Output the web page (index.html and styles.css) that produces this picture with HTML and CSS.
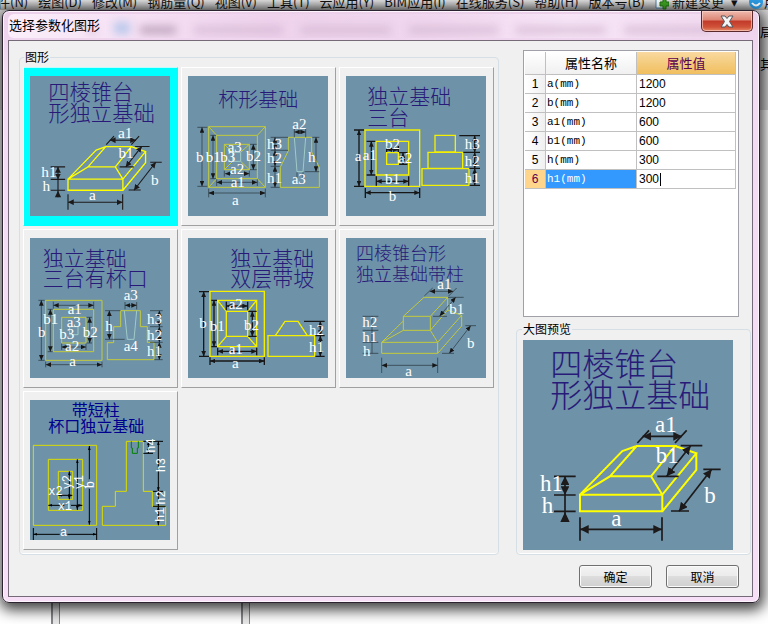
FILE: index.html
```html
<!DOCTYPE html>
<html lang="zh-CN">
<head>
<meta charset="utf-8">
<title>选择参数化图形</title>
<link rel="stylesheet" href="styles.css">
</head>
<body>
<svg class="defs" width="0" height="0" aria-hidden="true">
  <defs>
    <marker id="arrow" viewBox="0 0 16 14" refX="16" refY="7" markerWidth="16" markerHeight="14" markerUnits="userSpaceOnUse" orient="auto-start-reverse"><path d="M0 0L16 7L0 14Z" fill="#171717"/></marker>
    <marker id="arrow-big" viewBox="0 0 26 26" refX="26" refY="13" markerWidth="26" markerHeight="26" markerUnits="userSpaceOnUse" orient="auto-start-reverse"><path d="M0 0L26 13L0 26Z" fill="#1c1a1a"/></marker>
    <marker id="arrow-slim" viewBox="0 0 12 8" refX="12" refY="4" markerWidth="12" markerHeight="8" markerUnits="userSpaceOnUse" orient="auto-start-reverse"><path d="M0 0L12 4L0 8Z" fill="#000"/></marker>
    <symbol id="pyramid" viewBox="24 60 630 630">
      <text class="name name-pyramid" x="106" y="167">四棱锥台</text>
      <text class="name name-pyramid" x="106" y="261">形独立基础</text>
      <g fill="none" stroke="#ffff00" stroke-width="6">
        <path d="M195 524H442V574H195ZM195 524L285 469H408L442 524M285 469L365 378H480L408 469M195 524L322 393L365 378M480 378L544 400L442 524M544 400V450L442 574"/>
      </g>
      <g fill="none" stroke="#1c1a1a" stroke-width="5">
        <path d="M367 369L402 331M480 369L515 331M497 377H562M427 469H491M117 469H182M117 525H182M117 574H182M565 448H617M468 573H522M195 592V662M441 592V662"/>
        <path class="dim-big" d="M383 349H501"/>
        <path class="dim-big" d="M455 469L527 377"/>
        <path class="dim-big" d="M492 574L590 448"/>
        <path class="dim-big" d="M195 628H441"/>
        <path class="dim-big" d="M150 469V525"/>
        <path d="M150 525V606"/>
      </g>
      <path d="M150 576L164 606H136Z" fill="#1c1a1a"/>
      <g class="label label-pyramid">
        <text x="420" y="337">a1</text><text x="422" y="428">b1</text><text x="568" y="550">b</text>
        <text x="75" y="513">h1</text><text x="80" y="578">h</text><text x="289" y="618">a</text>
      </g>
    </symbol>
  </defs>
</svg>

<div class="backdrop" aria-hidden="true">
  <span class="splitter first"></span>
  <span class="splitter second"></span>
  <span class="edge-text upper">局</span>
  <span class="edge-text lower">其</span>
</div>

<nav class="menubar">
  <a href="#">件(N)</a><a href="#">绘图(D)</a><a href="#">修改(M)</a><a href="#">钢筋量(Q)</a><a href="#">视图(V)</a><a href="#">工具(T)</a><a href="#">云应用(Y)</a><a href="#">BIM应用(I)</a><a href="#">在线服务(S)</a><a href="#">帮助(H)</a><a href="#">版本号(B)</a>
  <a href="#" class="change"><svg width="14" height="16" viewBox="0 0 14 16"><path d="M1 0V14H9" fill="#fff" stroke="#4d83a8"/><path d="M8 5H11V8H14V12H11V15H8V12H5V8H8Z" fill="#3da321" stroke="#1f7010"/></svg>新建变更<span class="arrow">▾</span></a>
  <a href="#" class="user"><svg width="16" height="16" viewBox="0 0 16 16"><circle cx="8" cy="8" r="7" fill="#2c9be4"/><path d="M4 9Q8 14 12 9" fill="none" stroke="#fff" stroke-width="2"/></svg>用户</a>
</nav>

<main class="dialog">
  <header class="titlebar">
    <div class="ghosts" aria-hidden="true"><i></i><i class="blue"></i><i class="dark"></i><i></i><i></i><i></i><i></i><i></i></div>
    <h1>选择参数化图形</h1>
    <button class="close" aria-label="关闭"><svg width="14" height="13" viewBox="0 0 28 26"><path d="M2 2H10L14 7L18 2H26L19 13L26 24H18L14 19L10 24H2L9 13Z" fill="#f4f4f4" stroke="#50575f" stroke-width="2"/></svg></button>
  </header>

  <div class="panel">
    <div class="columns">
      <fieldset class="group shapes">
        <legend>图形</legend>
        <div class="tiles">
          <button class="tile selected" aria-label="四棱锥台形独立基础"><svg viewBox="0 0 420 420"><use href="#pyramid" width="420" height="420"/></svg></button>

          <button class="tile" aria-label="杯形基础"><svg viewBox="30 36 420 420">
            <text class="name" x="121" y="130">杯形基础</text>
            <g class="yellow thin"><path d="M92 188H262V370H92ZM116 214H238V344H116ZM139 241H214V317H139ZM92 188L116 214M262 188L238 214M92 370L116 344M262 370L238 344M139 241L164 265M214 241L188 265M139 317L164 292M214 317L188 292M331 220H401V264L424 310V370H307V310L331 260Z"/></g>
            <path class="pale" d="M164 265H188V292H164ZM349 220L357 323H375L383 220"/>
            <g class="black thin"><path d="M58 190H88M58 367H88M92 374V400M262 374V400M116 346V366M238 346V366M139 320V338M214 320V338M97 214H114M97 344H114M216 241H236M216 317H236M349 195V220M383 195V220M278 220H330M278 259H330M278 307H305M278 370H305M380 323H424M403 220H424M357 325V345M375 325V345"/>
            <path class="dim" d="M72 190V367"/><path class="dim" d="M105 214V344"/><path class="dim" d="M92 387H262"/><path class="dim" d="M116 355H238"/><path class="dim" d="M141 329H214"/><path class="dim" d="M226 241V317"/><path class="dim" d="M349 204H383"/><path class="dim" d="M291 220V259"/><path class="dim" d="M291 259V307"/><path class="dim" d="M291 307V370"/><path class="dim" d="M414 220V323"/></g>
            <g class="label"><text x="54" y="293">b</text><text x="83" y="293">b1</text><text x="127" y="293">b3</text><text x="204" y="290">b2</text><text x="149" y="264">a3</text><text x="156" y="330">a2</text><text x="158" y="369">a1</text><text x="162" y="423">a</text><text x="343" y="195">a2</text><text x="267" y="255">h3</text><text x="267" y="297">h2</text><text x="267" y="357">h1</text><text x="390" y="293">h</text><text x="341" y="360">a3</text></g>
          </svg></button>

          <button class="tile" aria-label="独立基础三台"><svg viewBox="30 36 420 420">
            <text class="name wide" x="94" y="120">独立基础</text><text class="name wide" x="94" y="184">三台</text>
            <g class="yellow"><path d="M87 198H251V367H87ZM120 232H218V333H120ZM152 266H187V301H152ZM297 214H358V264H297ZM276 265H380V313H276ZM258 314H399V364H258Z"/></g>
            <g class="black"><path d="M54 198H84M54 367H84M92 232H118M92 333H118M88 372V402M251 372V402M121 337V365M218 337V365M370 215H432M382 265H432M400 313H432M401 364H432M152 246V264M187 246V264M189 266H214M189 301H214"/>
            <path class="dim" d="M69 198V367"/><path class="dim" d="M106 232V333"/><path class="dim" d="M88 386H251"/><path class="dim" d="M121 352H218"/><path class="dim" d="M152 257H187"/><path class="dim" d="M201 266V301"/><path class="dim" d="M416 215V265"/><path class="dim" d="M416 265V313"/><path class="dim" d="M416 313V364"/></g>
            <g class="label"><text x="56" y="290">a</text><text x="80" y="287">a1</text><text x="147" y="254">b2</text><text x="186" y="297">a2</text><text x="147" y="361">b1</text><text x="158" y="411">b</text><text x="386" y="256">h3</text><text x="386" y="307">h2</text><text x="386" y="357">h1</text></g>
          </svg></button>

          <button class="tile" aria-label="独立基础三台有杯口"><svg viewBox="30 36 420 420">
            <text class="name wide" x="68" y="119">独立基础</text><text class="name wide" x="68" y="181">三台有杯口</text>
            <g class="yellow thin"><path d="M77 223H246V403H77ZM100 250H221V377H100ZM125 274H198V351H125ZM302 254H361V302H382V349H402V401H262V350H281V302H302Z"/></g>
            <path class="pale" d="M149 302H174V326H149ZM313 254L322 340H342L350 254"/>
            <g class="black thin"><path d="M55 223H74M55 403H74M83 250H98M83 377H98M77 407V424M246 407V424M100 227V248M221 227V248M125 353V372M198 353V372M200 274H216M200 351H216M315 228V250M350 228V250M255 254H301M255 340H314M390 254H428M390 302H428M390 349H428M403 401H428"/>
            <path class="dim" d="M64 223V403"/><path class="dim" d="M91 250V377"/><path class="dim" d="M77 416H246"/><path class="dim" d="M100 238H221"/><path class="dim" d="M125 363H198"/><path class="dim" d="M209 274V351"/><path class="dim" d="M315 238H350"/><path class="dim" d="M268 254V340"/><path class="dim" d="M418 254V302"/><path class="dim" d="M418 302V349"/><path class="dim" d="M418 349V401"/></g>
            <g class="label"><text x="54" y="333">b</text><text x="70" y="295">b1</text><text x="143" y="264">a1</text><text x="140" y="304">a3</text><text x="118" y="338">b3</text><text x="188" y="333">b2</text><text x="135" y="375">a2</text><text x="148" y="419">a</text><text x="311" y="221">a3</text><text x="256" y="314">h</text><text x="311" y="374">a4</text><text x="381" y="295">h3</text><text x="381" y="341">h2</text><text x="381" y="391">h1</text></g>
          </svg></button>

          <button class="tile" aria-label="独立基础双层带坡"><svg viewBox="30 36 420 420">
            <text class="name wide" x="157" y="119">独立基础</text><text class="name wide" x="157" y="181">双层带坡</text>
            <g class="yellow"><path d="M96 196H259V391H96ZM119 223H236V362H119ZM145 256H209V331H145ZM119 223L145 256M236 223L209 256M119 362L145 331M236 362L209 331M270 329H410V391H270ZM292 329L321 286H360L388 329"/></g>
            <g class="black"><path d="M63 197H93M63 391H93M100 223H117M100 362H117M96 394V417M259 394V417M119 365V388M236 365V388M145 227V253M209 227V253M211 256H236M211 331H236M378 286H440M412 329H440M412 391H440"/>
            <path class="dim" d="M77 197V391"/><path class="dim" d="M108 223V362"/><path class="dim" d="M96 405H259"/><path class="dim" d="M119 376H236"/><path class="dim" d="M145 240H209"/><path class="dim" d="M223 256V331"/><path class="dim" d="M427 286V329"/><path class="dim" d="M427 329V391"/></g>
            <g class="label"><text x="64" y="307">b</text><text x="95" y="315">b1</text><text x="152" y="250">a2</text><text x="198" y="311">b2</text><text x="152" y="384">a1</text><text x="162" y="426">a</text><text x="393" y="326">h2</text><text x="393" y="377">h1</text></g>
          </svg></button>

          <button class="tile" aria-label="四棱锥台形独立基础带柱"><svg viewBox="30 36 420 420">
            <text class="name narrow" x="60" y="101">四棱锥台形</text><text class="name narrow" x="60" y="164">独立基础带柱</text>
            <g class="yellow thin"><path d="M202 271H283V313H202ZM202 271L264 214H335L283 271M335 214V252L283 313M202 285L137 349M202 313L137 349H305L283 313M137 349V382H305V349L377 268V300L305 382M335 252L377 268"/></g>
            <g class="black thin"><path d="M265 210L290 186M338 210L362 186M336 214H383M291 271H333M80 271H127M80 313H127M80 349H127M80 382H127M108 271V382M137 395V441M305 395V441M388 299H420M318 382H354"/>
            <path class="dim" d="M281 196H352"/><path class="dim" d="M311 270L359 214"/><path class="dim" d="M340 382L404 299"/><path class="dim" d="M137 418H305"/></g>
            <g class="label"><text x="304" y="188">a1</text><text x="340" y="263">b1</text><text x="393" y="367">b</text><text x="79" y="303">h2</text><text x="79" y="349">h1</text><text x="81" y="391">h</text><text x="208" y="449">a</text></g>
          </svg></button>

          <button class="tile" aria-label="带短柱杯口独立基础"><svg viewBox="30 36 420 420">
            <text class="name column" x="155" y="84">带短柱</text><text class="name column" x="85" y="132">杯口独立基础</text>
            <g class="yellow crisp"><path d="M40 172H230V412H40ZM85 214H188V367H85ZM115 250H158V334H115ZM319 160H370V310H397V355H437V412H247V355H286V310H319Z"/></g>
            <path d="M334 160V180H337V196H352V180H355V160" fill="none" stroke="#008000" stroke-width="3"/>
            <g class="black crisp"><path d="M40 420V456M230 420V456M370 160H429M370 196H399M399 310H429M399 355H437"/>
            <path class="slim" d="M40 439H230"/><path class="slim" d="M208 174V410"/><path class="slim" d="M172 214V366"/><path class="slim" d="M148 250V334"/><path class="slim" d="M85 352H187"/><path class="slim" d="M115 322H157"/><path class="slim" d="M385 160V196"/><path class="slim" d="M415 160V310"/><path class="slim" d="M415 310V355"/><path class="slim" d="M415 355V412"/></g>
            <path d="M119 439H142M208 274V302M133 352H153" stroke="#6e92a8" stroke-width="5"/>
            <g class="label mono"><text x="120" y="445">a</text><text x="113" y="366">x1</text><text x="85" y="321">x2</text><text transform="translate(152 304) rotate(-90)">y2</text><text transform="translate(188 304) rotate(-90)">y1</text><text transform="translate(223 301) rotate(-90)">b</text><text transform="translate(404 194) rotate(-90)">h4</text><text transform="translate(434 253) rotate(-90)">h3</text><text transform="translate(434 350) rotate(-90)">h2</text><text transform="translate(432 402) rotate(-90)">h1</text></g>
          </svg></button>
        </div>
      </fieldset>

      <section class="side">
        <div class="table-box">
          <table>
            <colgroup><col class="c-num"><col class="c-name"><col class="c-value"></colgroup>
            <thead><tr><th></th><th>属性名称</th><th class="active">属性值</th></tr></thead>
            <tbody>
              <tr><th>1</th><td>a(mm)</td><td><input aria-label="a(mm)" value="1200"></td></tr>
              <tr><th>2</th><td>b(mm)</td><td><input aria-label="b(mm)" value="1200"></td></tr>
              <tr><th>3</th><td>a1(mm)</td><td><input aria-label="a1(mm)" value="600"></td></tr>
              <tr><th>4</th><td>b1(mm)</td><td><input aria-label="b1(mm)" value="600"></td></tr>
              <tr><th>5</th><td>h(mm)</td><td><input aria-label="h(mm)" value="300"></td></tr>
              <tr class="current"><th>6</th><td>h1(mm)</td><td><div class="editing"><input aria-label="h1(mm)" value="300"></div></td></tr>
            </tbody>
          </table>
        </div>
        <fieldset class="group preview">
          <legend>大图预览</legend>
          <svg viewBox="0 0 630 630" role="img" aria-label="四棱锥台形独立基础"><use href="#pyramid" width="630" height="630"/></svg>
        </fieldset>
      </section>
    </div>
    <footer class="actions"><button>确定</button><button>取消</button></footer>
  </div>
</main>
</body>
</html>
```
FILE: styles.css
```css
* { box-sizing: border-box; }

body {
  margin: 0;
  min-height: 100vh;
  overflow: hidden;
  position: relative;
  background: #fff;
  color: #000;
  font: 12px/16px "Liberation Sans", "Noto Sans CJK SC", sans-serif;
}

button, input { font: inherit; color: inherit; }
.defs { position: absolute; }

/* Application window behind the dialog */
.backdrop {
  position: absolute;
  inset: 0;
  overflow: hidden;
  background: linear-gradient(#d8d8d8 0 110px, #fff 110px);
}
.splitter {
  position: absolute;
  top: 110px;
  bottom: 0;
  width: 9px;
  border: solid #85858a;
  border-width: 0 1px 0 2px;
  background: #e8e8e8;
}
.first { left: 51px; }
.second { left: 241px; }
.edge-text { position: absolute; left: 760px; font-size: 13px; }
.upper { top: 25px; }
.lower { top: 57px; }

.menubar {
  position: relative;
  display: flex;
  gap: 10px;
  height: 10px;
  margin-left: -3px;
  overflow: hidden;
  background: linear-gradient(#dedede, #9a9a9a);
  font: 13px/16px "Noto Sans CJK SC", sans-serif;
  white-space: nowrap;
}
.menubar a {
  display: flex;
  height: 16px;
  margin-top: -6px;
  color: #111;
  text-decoration: none;
}
.menubar svg { flex: none; }
.menubar .change { gap: 3px; }
.arrow { margin-left: 4px; }

/* Dialog frame */
.dialog {
  position: relative;
  margin: 0 8px 19px 2px;
  padding: 0 6px 5px 5px;
  border: 1px solid #2b2430;
  border-radius: 7px;
  background: linear-gradient(#ecd0ea, #f3dcf3 60px, #f7dff7);
  box-shadow: inset 0 0 0 1px #fdf4fd, 1px 4px 14px 3px rgba(0, 0, 0, .75);
}
.titlebar {
  position: relative;
  display: flex;
  align-items: flex-start;
  justify-content: space-between;
  height: 29px;
}
.titlebar h1 {
  margin: 5px 0 0 1px;
  font: 13px/18px "Noto Sans CJK SC", sans-serif;
}
.titlebar h1, .close { position: relative; }
.ghosts {
  position: absolute;
  inset: 3px 40px 2px 0;
  display: flex;
  align-items: flex-end;
  gap: 18px;
  padding-left: 80px;
  overflow: hidden;
  border-radius: 6px;
  background: linear-gradient(90deg, #fbeefa 0, #f6e2f5 110px, #efd3ed 260px, #f0d6ee 420px, #f7e5f7 560px, #f3dcf2);
}
.ghosts i {
  flex: 1;
  height: 8px;
  margin-bottom: 4px;
  background: #cdb0cc;
  filter: blur(4px);
  opacity: .6;
}
.ghosts .blue { flex: none; width: 16px; height: 12px; background: #93b9e6; }
.ghosts i:first-child { flex: none; width: 8px; }
.ghosts .dark { flex: none; width: 36px; margin-left: -8px; background: #9d829d; }
.close {
  display: grid;
  place-items: center;
  width: 52px;
  height: 21px;
  padding: 0;
  border: 1px solid #5c2a2c;
  border-top: 0;
  border-radius: 0 0 5px 5px;
  background: linear-gradient(#eebaae, #dd8674 45%, #c2392a 50%, #cf5238 80%, #e68868);
  box-shadow: inset 0 0 0 1px rgba(255, 220, 210, .6);
}

.panel {
  border: 1px solid #756b78;
  background: #f0f0f0;
}
.columns {
  display: flex;
  justify-content: space-between;
  padding: 9px 1px 0 10px;
}
.group {
  min-width: 0;
  margin: 0;
  border: 1px solid #d5dfe5;
  border-radius: 4px;
  box-shadow: inset 0 -1px #fff;
}
.group legend {
  height: 14px;
  padding: 0 1px;
  font: 12px/14px "Noto Sans CJK SC", sans-serif;
}
.shapes { padding: 3px 3px 4px; }
.shapes legend { margin-left: 1px; }
.tiles {
  display: grid;
  grid-template-columns: repeat(3, 155px);
  gap: 3px;
  padding-right: 1px;
}
.tile {
  padding: 8px 7px 9px 6px;
  border: 1px solid;
  border-color: #fff #a0a0a0 #a0a0a0 #fff;
  background: #f0f0f0;
}
.tile.selected { background: #00ffff; border-color: #b8ffff #00ffff #00ffff #fff; }
.tile svg, .preview svg { display: block; width: 100%; background: #6e92a8; }

/* Drawings */
.name { font: 300 60px "Noto Sans CJK SC", sans-serif; fill: #281a78; }
.name.wide { font-size: 63px; }
.name.narrow { font-size: 54px; }
.name.column { font-size: 48px; font-weight: 400; fill: #000090; }
.name-pyramid { font-size: 96px; }
.label { font: 45px "Liberation Serif", serif; fill: #fff; }
.label-pyramid { font-size: 69px; }
.label.mono { font: 36px "Liberation Mono", monospace; }
.yellow { fill: none; stroke: #f4f000; stroke-width: 4px; }
.yellow.thin { stroke: #c3ca3c; stroke-width: 3px; }
.yellow.crisp { stroke: #dcdc00; stroke-width: 3px; }
.black { fill: none; stroke: #171717; stroke-width: 4px; }
.black.thin { stroke: #263038; stroke-width: 2px; }
.black.crisp { stroke: #000; stroke-width: 3px; }
.pale { fill: none; stroke: #9fcbc8; stroke-width: 3px; }
.dim { marker-start: url(#arrow); marker-end: url(#arrow); }
.dim-big { marker-start: url(#arrow-big); marker-end: url(#arrow-big); }
.slim { marker-start: url(#arrow-slim); marker-end: url(#arrow-slim); }

/* Right-hand side */
.side { width: 235px; }
.table-box {
  height: 267px;
  margin: 0 12px 5px 7px;
  padding: 1px;
  border: 1px solid #a0a0a8;
  background: #fff;
}
table {
  table-layout: fixed;
  width: 211px;
  border-collapse: separate;
  border-spacing: 0;
}
.c-num { width: 21px; }
.c-name { width: 91px; }
.c-value { width: 99px; }
th, td {
  height: 19px;
  padding: 0;
  border: solid #c0c0c0;
  border-width: 0 1px 1px 0;
  line-height: 18px;
}
thead th {
  height: 23px;
  background: linear-gradient(#fff, #f0f0f0);
  font: 13px/22px "Noto Sans CJK SC", sans-serif;
}
thead .active { background: linear-gradient(#f9d9a0, #f0bf5e); color: #5a0050; }
tbody th { background: linear-gradient(90deg, #fff, #f0f0f0); font-weight: 400; text-align: center; }
td { padding-left: 2px; }
td:nth-child(2) { padding-left: 1px; font: 11px/18px "Liberation Mono", monospace; }
td input {
  display: block;
  width: 100%;
  height: 18px;
  padding: 0;
  border: 0;
  outline: 0;
  background: none;
}
.current th { background: #ffd58c; color: #5a0050; }
.current td:nth-child(2) { background: #3399ff; color: #fff; }
.editing { display: flex; align-items: center; }
.editing input { width: 21px; }
.editing::after { content: ""; width: 1px; height: 13px; background: #000; }

.preview { padding: 4px 17px 4px 6px; }
.preview legend { margin-left: -1px; }

.actions {
  display: flex;
  justify-content: flex-end;
  gap: 14px;
  padding: 10px 13px 8px;
}
.actions button {
  width: 73px;
  height: 23px;
  padding: 0;
  border: 1px solid #707070;
  border-radius: 3px;
  background: linear-gradient(#f3f3f3, #ebebeb 50%, #dddddd 50%, #cfcfcf);
  box-shadow: inset 0 0 0 1px #fbfbfb;
  font: 12px/20px "Noto Sans CJK SC", sans-serif;
}
```
